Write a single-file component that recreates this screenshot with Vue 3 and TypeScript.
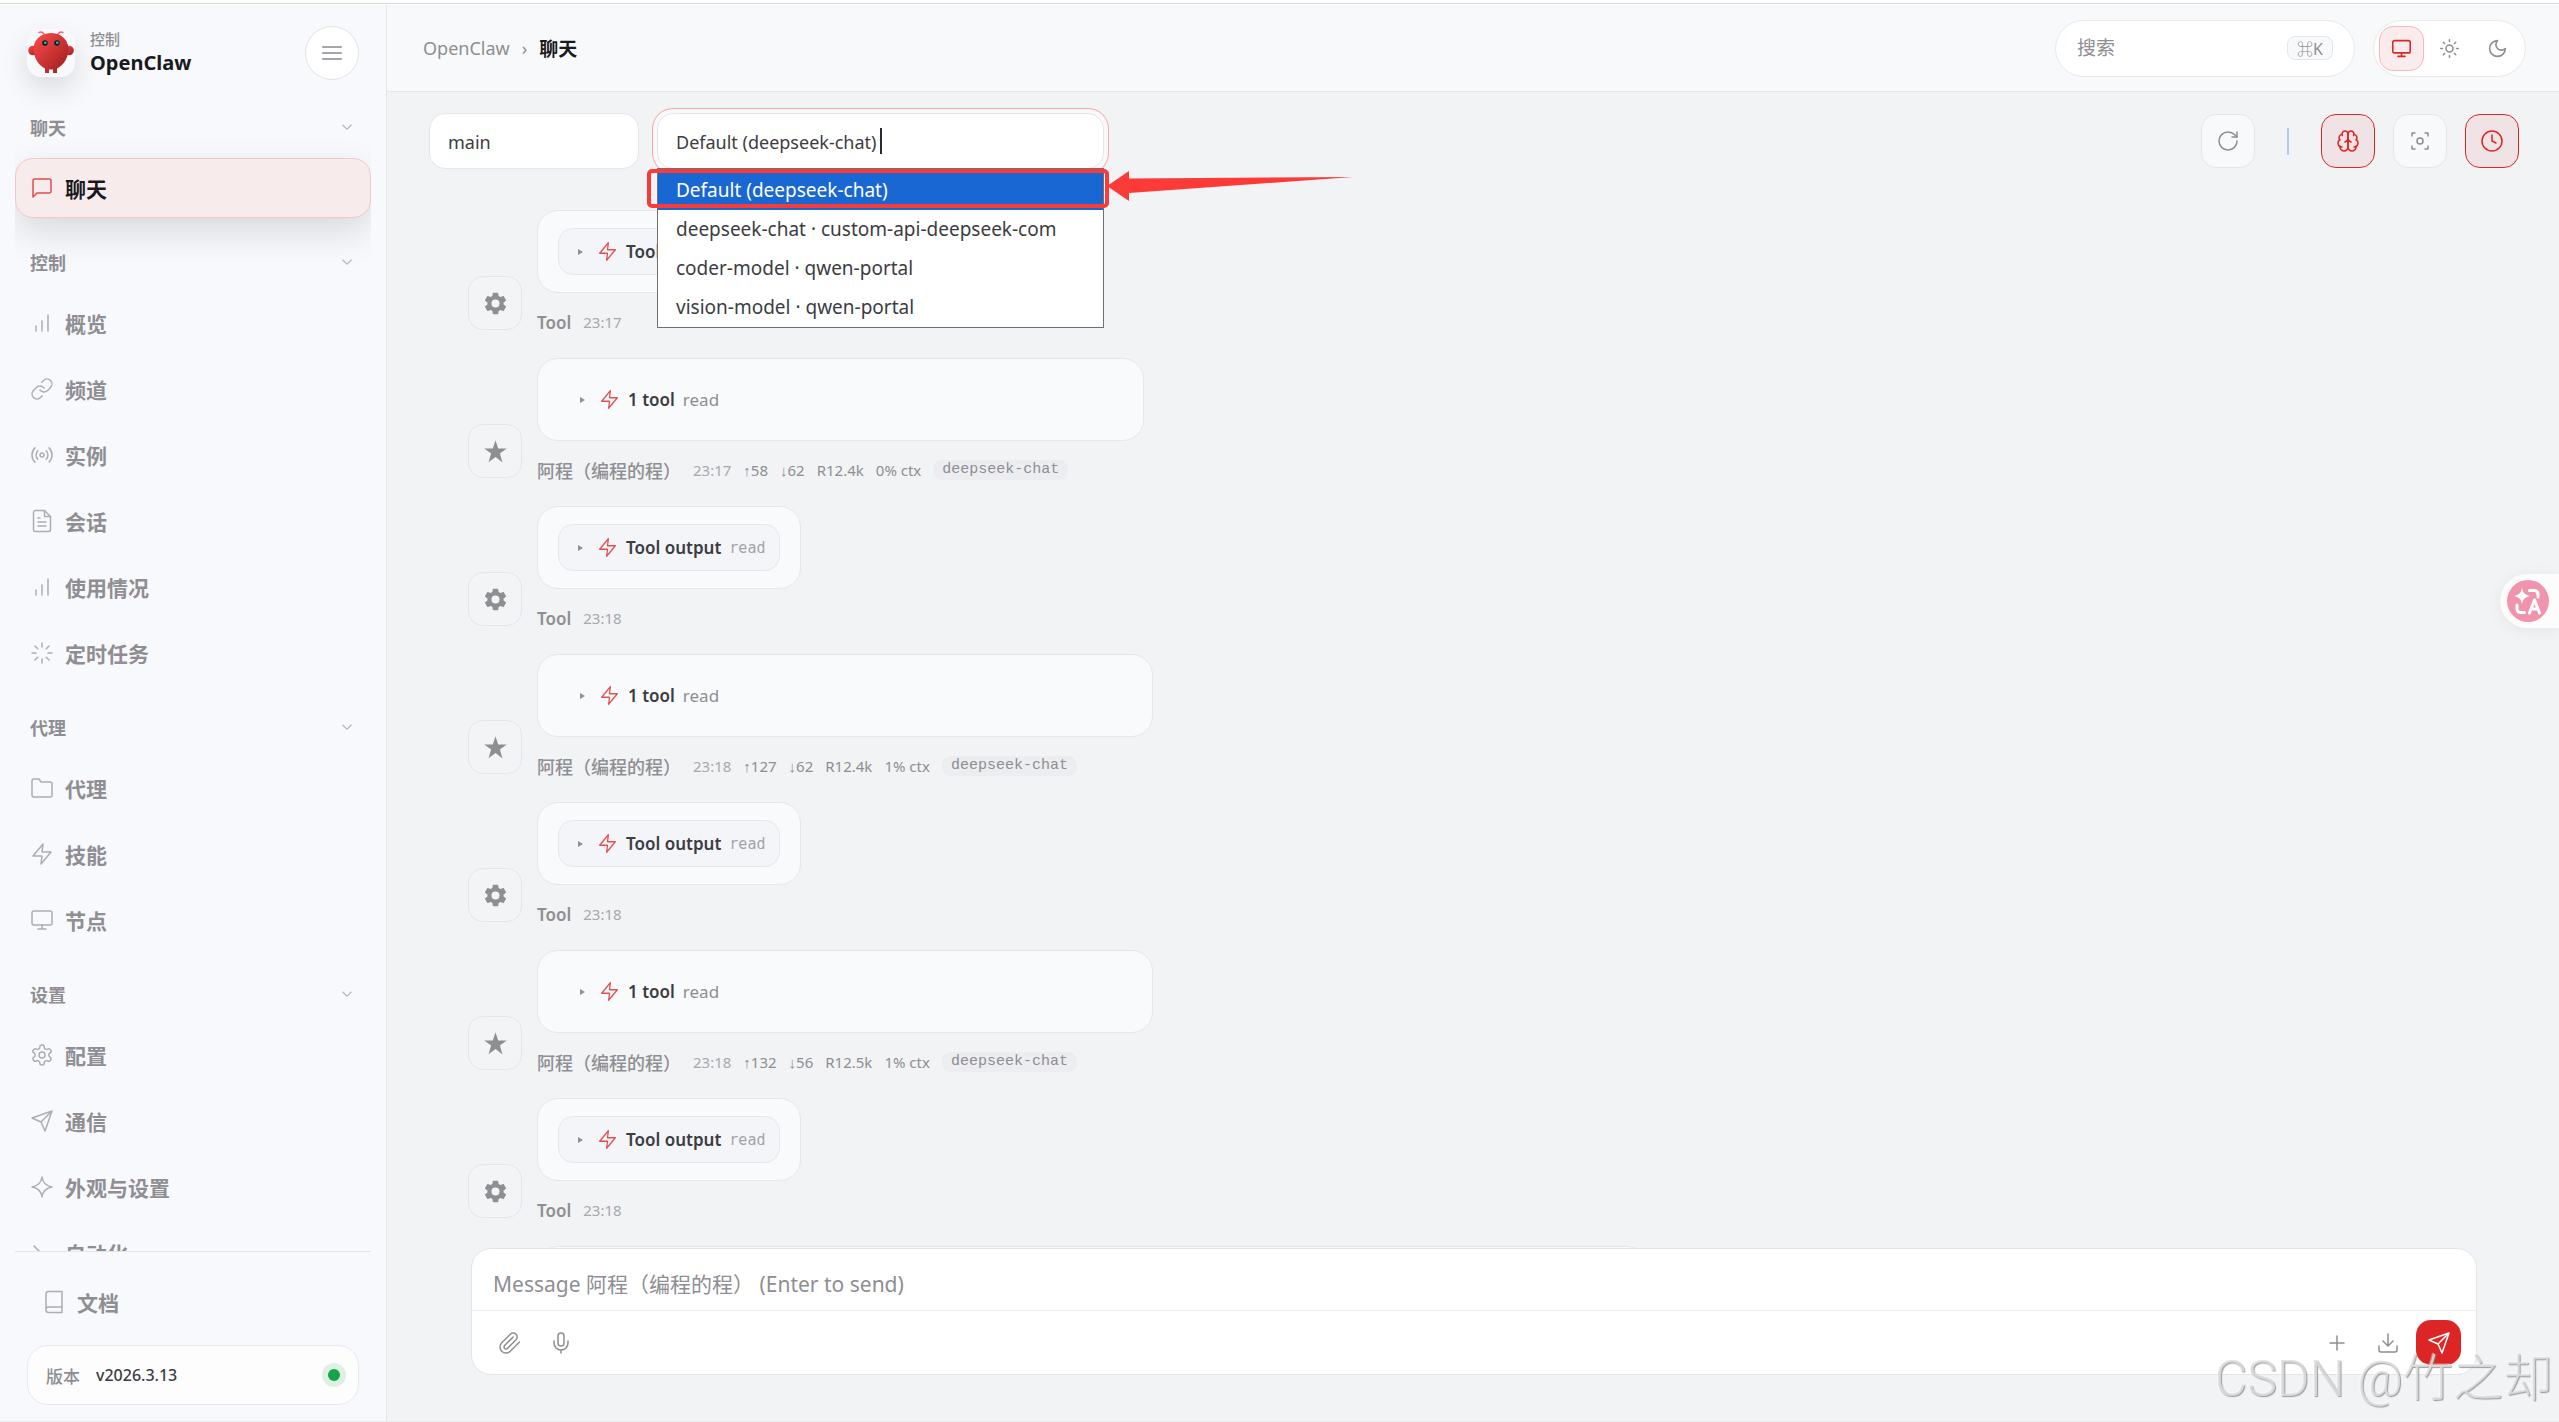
<script setup lang="ts">
import { ref } from 'vue'

interface NavItem {
  label: string
  icon: string
  active?: boolean
}
interface NavSection {
  title: string
  items: NavItem[]
}
interface Message {
  kind: 'output' | 'assistant'
  time: string
  stats?: string[]
}

const icons: Record<string, string> = {
  chat: '<path d="M21 15a2 2 0 0 1-2 2H7l-4 4V5a2 2 0 0 1 2-2h14a2 2 0 0 1 2 2z"/>',
  bars: '<path d="M12 20V10M18 20V4M6 20v-5"/>',
  link: '<path d="M10 13a5 5 0 0 0 7.54.54l3-3a5 5 0 0 0-7.07-7.07l-1.72 1.71"/><path d="M14 11a5 5 0 0 0-7.54-.54l-3 3a5 5 0 0 0 7.07 7.07l1.71-1.71"/>',
  radio: '<path d="M4.9 19.1C1 15.2 1 8.8 4.9 4.9M7.8 16.2c-2.3-2.3-2.3-6.1 0-8.5M16.2 7.8c2.3 2.3 2.3 6.1 0 8.5M19.1 4.9C23 8.8 23 15.1 19.1 19"/><circle cx="12" cy="12" r="2"/>',
  file: '<path d="M14.5 1.5H5.500a2 2 0 0 0-2 2v17a2 2 0 0 0 2 2h13a2 2 0 0 0 2-2V7.500z"/><path d="M14.500 1.500v6h6M16 13H8M16 17H8M10 9H8"/>',
  loader: '<path d="M12 2v4M12 18v4M4.930 4.930l2.830 2.830M16.240 16.240l2.830 2.830M2 12h4M18 12h4M4.930 19.070l2.830-2.830M16.240 7.760l2.830-2.830"/>',
  folder: '<path d="M22 19a2 2 0 0 1-2 2H4a2 2 0 0 1-2-2V5a2 2 0 0 1 2-2h5l2 3h9a2 2 0 0 1 2 2z"/>',
  bolt: '<path d="M13 2 3 14h9l-1 8 10-12h-9z"/>',
  monitor: '<rect x="2" y="3" width="20" height="14" rx="2"/><path d="M8 21h8M12 17v4"/>',
  gear: '<path d="M12.220 2h-.440a2 2 0 0 0-2 2v.180a2 2 0 0 1-1 1.730l-.430.250a2 2 0 0 1-2 0l-.150-.080a2 2 0 0 0-2.730.730l-.220.380a2 2 0 0 0 .730 2.730l.150.100a2 2 0 0 1 1 1.720v.510a2 2 0 0 1-1 1.740l-.150.090a2 2 0 0 0-.730 2.730l.220.380a2 2 0 0 0 2.730.730l.150-.080a2 2 0 0 1 2 0l.430.250a2 2 0 0 1 1 1.730V20a2 2 0 0 0 2 2h.440a2 2 0 0 0 2-2v-.180a2 2 0 0 1 1-1.730l.430-.250a2 2 0 0 1 2 0l.150.080a2 2 0 0 0 2.730-.730l.220-.390a2 2 0 0 0-.730-2.730l-.150-.080a2 2 0 0 1-1-1.740v-.500a2 2 0 0 1 1-1.740l.150-.090a2 2 0 0 0 .730-2.730l-.220-.380a2 2 0 0 0-2.730-.730l-.150.080a2 2 0 0 1-2 0l-.430-.250a2 2 0 0 1-1-1.730V4a2 2 0 0 0-2-2z"/><circle cx="12" cy="12" r="3"/>',
  send: '<path d="m22 2-7 20-4-9-9-4zM22 2 11 13"/>',
  spark: '<path d="M12 2c.8 5.600 4 9 10 10-6 1-9.200 4.400-10 10-.8-5.600-4-9-10-10 6-1 9.200-4.400 10-10z"/>',
  terminal: '<path d="m4 17 6-6-6-6M12 19h8"/>',
  book: '<path d="M4 19.500A2.500 2.500 0 0 1 6.500 17H20M6.500 1.500H20v21H6.500A2.500 2.500 0 0 1 4 20V4a2.500 2.500 0 0 1 2.500-2.500z"/>',
  menu: '<path d="M3 6h18M3 12h18M3 18h18"/>',
  chevron: '<path d="m6 9 6 6 6-6"/>',
  sun: '<circle cx="12" cy="12" r="4"/><path d="M12 2v2M12 20v2M4.930 4.930l1.410 1.410M17.660 17.660l1.410 1.410M2 12h2M20 12h2M6.340 17.660l-1.410 1.410M19.070 4.930l-1.410 1.410"/>',
  moon: '<path d="M12 3a6 6 0 0 0 9 9 9 9 0 1 1-9-9z"/>',
  refresh: '<path d="M21 12a9 9 0 1 1-9-9c2.520 0 4.930 1 6.740 2.740L21 8"/><path d="M21 3v5h-5"/>',
  brain: '<path d="M12 5a3 3 0 1 0-5.997.125 4 4 0 0 0-2.526 5.770 4 4 0 0 0 .556 6.588A4 4 0 1 0 12 18Z"/><path d="M12 5a3 3 0 1 1 5.997.125 4 4 0 0 1 2.526 5.770 4 4 0 0 1-.556 6.588A4 4 0 1 1 12 18Z"/><path d="M15 13a4.500 4.500 0 0 1-3-4 4.500 4.500 0 0 1-3 4M17.599 6.500a3 3 0 0 0 .399-1.375M6.003 5.125A3 3 0 0 0 6.401 6.500M3.477 10.896a4 4 0 0 1 .585-.396M19.938 10.500a4 4 0 0 1 .585.396M6 18a4 4 0 0 1-1.967-.516M19.967 17.484A4 4 0 0 1 18 18"/>',
  focus: '<path d="M4 7V4h3M17 4h3v3M20 17v3h-3M7 20H4v-3"/><circle cx="12" cy="12" r="3"/>',
  clock: '<circle cx="12" cy="12" r="10"/><path d="M12 6v6l4 2"/>',
  clip: '<path d="m21.440 11.050-9.190 9.190a6 6 0 0 1-8.490-8.490l8.570-8.570A4 4 0 1 1 18 8.840l-8.590 8.570a2 2 0 0 1-2.830-2.830l8.490-8.480"/>',
  mic: '<path d="M12 2a3 3 0 0 0-3 3v7a3 3 0 0 0 6 0V5a3 3 0 0 0-3-3z"/><path d="M19 10v2a7 7 0 0 1-14 0v-2M12 19v3"/>',
  plus: '<path d="M5 12h14M12 5v14"/>',
  download: '<path d="M21 15v4a2 2 0 0 1-2 2H5a2 2 0 0 1-2-2v-4M7 10l5 5 5-5M12 15V3"/>',
}

const sections: NavSection[] = [
  { title: '聊天', items: [{ label: '聊天', icon: 'chat', active: true }] },
  {
    title: '控制',
    items: [
      { label: '概览', icon: 'bars' },
      { label: '频道', icon: 'link' },
      { label: '实例', icon: 'radio' },
      { label: '会话', icon: 'file' },
      { label: '使用情况', icon: 'bars' },
      { label: '定时任务', icon: 'loader' },
    ],
  },
  {
    title: '代理',
    items: [
      { label: '代理', icon: 'folder' },
      { label: '技能', icon: 'bolt' },
      { label: '节点', icon: 'monitor' },
    ],
  },
  {
    title: '设置',
    items: [
      { label: '配置', icon: 'gear' },
      { label: '通信', icon: 'send' },
      { label: '外观与设置', icon: 'spark' },
      { label: '自动化', icon: 'terminal' },
    ],
  },
]

const models = [
  'Default (deepseek-chat)',
  'deepseek-chat · custom-api-deepseek-com',
  'coder-model · qwen-portal',
  'vision-model · qwen-portal',
]
const model = ref(models[0])
const session = ref('main')
const query = ref('')
const draft = ref('')

const messages: Message[] = [
  { kind: 'output', time: '23:17' },
  { kind: 'assistant', time: '23:17', stats: ['↑58', '↓62', 'R12.4k', '0% ctx'] },
  { kind: 'output', time: '23:18' },
  { kind: 'assistant', time: '23:18', stats: ['↑127', '↓62', 'R12.4k', '1% ctx'] },
  { kind: 'output', time: '23:18' },
  { kind: 'assistant', time: '23:18', stats: ['↑132', '↓56', 'R12.5k', '1% ctx'] },
  { kind: 'output', time: '23:18' },
]
</script>

<template>
  <div class="shell">
    <div class="edge"></div>
    <div class="layout">
      <aside class="sidebar">
        <div class="brand">
          <svg class="logo" viewBox="0 0 48 48">
            <defs>
              <linearGradient id="shell-red" x1="0" y1="0" x2="1" y2="1">
                <stop offset="0" stop-color="#ff4d4d" />
                <stop offset="1" stop-color="#991b1b" />
              </linearGradient>
            </defs>
            <path d="M17 5q-2-3-5-1.500M31 5q2-3 5-1.500" fill="none" stroke="#f26a6a" stroke-width="1.500" stroke-linecap="round" />
            <circle cx="6" cy="21.500" r="4.800" fill="url(#shell-red)" />
            <circle cx="42" cy="21.500" r="4.800" fill="url(#shell-red)" />
            <path d="M24 4C12 4 6 13 6.500 21c.6 9 6 16 11.500 18.500V44h4v-3.500h4V44h4v-4.500C35.500 37 41 30 41.500 21 42 13 36 4 24 4z" fill="url(#shell-red)" />
            <circle cx="18" cy="14" r="2.700" fill="#101820" />
            <circle cx="30" cy="14" r="2.700" fill="#101820" />
            <circle cx="18.300" cy="13.800" r="1.300" fill="#00d5bd" />
            <circle cx="30.300" cy="13.800" r="1.300" fill="#00d5bd" />
          </svg>
          <div class="brand-text">
            <span class="eyebrow">控制</span>
            <strong class="product">OpenClaw</strong>
          </div>
          <button class="collapse" type="button" aria-label="Toggle sidebar">
            <svg class="icon heavy" viewBox="0 0 24 24" v-html="icons.menu"></svg>
          </button>
        </div>

        <nav class="nav">
          <section v-for="s in sections" :key="s.title" class="nav-section">
            <button class="nav-title" type="button">
              <span>{{ s.title }}</span>
              <svg class="chevron" viewBox="0 0 24 24" v-html="icons.chevron"></svg>
            </button>
            <div class="nav-items">
              <a v-for="i in s.items" :key="i.label" href="#" class="nav-item" :class="{ active: i.active }">
                <svg class="icon" viewBox="0 0 24 24" v-html="icons[i.icon]"></svg>
                <span>{{ i.label }}</span>
              </a>
            </div>
          </section>
        </nav>

        <footer class="side-foot">
          <a href="#" class="nav-item">
            <svg class="icon" viewBox="0 0 24 24" v-html="icons.book"></svg>
            <span>文档</span>
          </a>
          <div class="version">
            <span class="version-label">版本</span>
            <span class="version-no">v2026.3.13</span>
            <span class="status"></span>
          </div>
        </footer>
      </aside>

      <div class="content">
        <header class="topbar">
          <div class="crumbs">
            <a href="#">OpenClaw</a>
            <span class="sep">›</span>
            <strong>聊天</strong>
          </div>
          <label class="search">
            <input v-model="query" type="text" placeholder="搜索" aria-label="搜索" />
            <kbd>⌘K</kbd>
          </label>
          <div class="themes">
            <button class="on" type="button" aria-label="System"><svg class="icon" viewBox="0 0 24 24" v-html="icons.monitor"></svg></button>
            <button type="button" aria-label="Light"><svg class="icon" viewBox="0 0 24 24" v-html="icons.sun"></svg></button>
            <button type="button" aria-label="Dark"><svg class="icon" viewBox="0 0 24 24" v-html="icons.moon"></svg></button>
          </div>
        </header>

        <div class="toolbar">
          <select v-model="session" class="field session" aria-label="Session">
            <option>main</option>
          </select>
          <div class="picker">
            <input v-model="model" class="field" type="text" role="combobox" aria-expanded="true" aria-label="Model" />
            <span class="caret"></span>
            <ul class="menu" role="listbox">
              <li v-for="(m, n) in models" :key="m" role="option" :aria-selected="n === 0" :class="{ chosen: n === 0 }">{{ m }}</li>
            </ul>
            <div class="mark"></div>
            <svg class="arrow" viewBox="0 0 246 32"><path d="M0 16 22 1v7.500L246 7 22 23v8z" fill="#fc3a38" /></svg>
          </div>
          <div class="tools">
            <button class="tool" type="button" aria-label="Refresh"><svg class="icon" viewBox="0 0 24 24" v-html="icons.refresh"></svg></button>
            <span class="rule"></span>
            <button class="tool on" type="button" aria-label="Thinking"><svg class="icon" viewBox="0 0 24 24" v-html="icons.brain"></svg></button>
            <button class="tool" type="button" aria-label="Focus"><svg class="icon" viewBox="0 0 24 24" v-html="icons.focus"></svg></button>
            <button class="tool on" type="button" aria-label="History"><svg class="icon" viewBox="0 0 24 24" v-html="icons.clock"></svg></button>
          </div>
        </div>

        <main class="thread">
          <article v-for="(m, n) in messages" :key="n" class="message">
            <div class="avatar">
              <svg v-if="m.kind === 'output'" viewBox="0 0 24 24">
                <path fill-rule="evenodd" d="M19.140 12.940a7 7 0 0 0 0-1.880l2.030-1.580a.5.5 0 0 0 .120-.610l-1.920-3.320a.5.5 0 0 0-.590-.220l-2.390.960a7 7 0 0 0-1.620-.940l-.360-2.540a.5.5 0 0 0-.480-.410h-3.840a.5.5 0 0 0-.480.410l-.360 2.540a7 7 0 0 0-1.620.940l-2.390-.960a.5.5 0 0 0-.590.220L2.740 8.870a.5.5 0 0 0 .120.610l2.030 1.580a7 7 0 0 0 0 1.880l-2.030 1.580a.5.5 0 0 0-.120.610l1.920 3.320c.120.220.370.290.590.220l2.390-.960a7 7 0 0 0 1.620.940l.360 2.540c.050.240.240.410.480.410h3.840a.5.5 0 0 0 .480-.410l.360-2.540a7 7 0 0 0 1.620-.940l2.390.960c.220.080.470 0 .590-.220l1.920-3.320a.5.5 0 0 0-.120-.610zM12 15.600a3.600 3.600 0 1 1 0-7.200 3.600 3.600 0 0 1 0 7.200z" />
              </svg>
              <svg v-else viewBox="0 0 24 24"><path d="m12 2 2.400 7.300H22l-6.100 4.500 2.300 7.700-6.200-4.700-6.200 4.700 2.300-7.700L2 9.300h7.600z" /></svg>
            </div>
            <div class="body">
              <div class="bubble">
                <div class="chip" :class="m.kind">
                  <span class="tri"></span>
                  <svg class="icon zap" viewBox="0 0 24 24" v-html="icons.bolt"></svg>
                  <strong>{{ m.kind === 'output' ? 'Tool output' : '1 tool' }}</strong>
                  <span class="fn">read</span>
                </div>
              </div>
              <div class="meta" :class="m.kind">
                <span class="who">{{ m.kind === 'output' ? 'Tool' : '阿程（编程的程）' }}</span>
                <time>{{ m.time }}</time>
                <span v-for="s in m.stats" :key="s">{{ s }}</span>
                <code v-if="m.stats">deepseek-chat</code>
              </div>
            </div>
          </article>
          <article class="message">
            <div class="body next"><div class="bubble"></div></div>
          </article>
        </main>

        <form class="composer" @submit.prevent>
          <textarea v-model="draft" rows="1" placeholder="Message 阿程（编程的程） (Enter to send)" aria-label="Message"></textarea>
          <div class="actions">
            <button type="button" aria-label="Attach"><svg class="icon" viewBox="0 0 24 24" v-html="icons.clip"></svg></button>
            <button type="button" aria-label="Voice"><svg class="icon" viewBox="0 0 24 24" v-html="icons.mic"></svg></button>
            <span class="space"></span>
            <button type="button" aria-label="New"><svg class="icon" viewBox="0 0 24 24" v-html="icons.plus"></svg></button>
            <button type="button" aria-label="Export"><svg class="icon" viewBox="0 0 24 24" v-html="icons.download"></svg></button>
            <button class="send" type="submit" aria-label="Send"><svg class="icon" viewBox="0 0 24 24" v-html="icons.send"></svg></button>
          </div>
        </form>
      </div>
    </div>

    <button class="translate" type="button" aria-label="Translate">
      <svg viewBox="0 0 42 42">
        <circle cx="21" cy="21" r="21" fill="#f093ac" />
        <path d="M15 7.500c1 5.500 2.500 7 8 8.500-5.500 1.500-7 3-8 8.500-1-5.500-2.500-7-8-8.500 5.500-1.500 7-3 8-8.500z" fill="#fff" />
        <path d="M22.500 10.500H27q4 0 4 4V17M10 25v3.500q0 4 4 4h3.500" fill="none" stroke="#fff" stroke-width="3" stroke-linecap="round" />
        <path d="m22.500 33 5-13 5 13M24.500 29h6" fill="none" stroke="#fff" stroke-width="3" stroke-linecap="round" stroke-linejoin="round" />
      </svg>
    </button>
    <div class="watermark">CSDN @竹之却</div>
  </div>
</template>

<style>
body {
  margin: 0;
  background: #f1f3f5;
}
</style>

<style scoped>
* {
  box-sizing: border-box;
}
.shell {
  position: relative;
  display: flex;
  flex-direction: column;
  height: 100vh;
  overflow: hidden;
  font-family: "Noto Sans", "Noto Sans CJK SC", sans-serif;
  font-size: 18px;
  color: #3c3c43;
  background: #f1f3f5;
  border-bottom: 1px solid #e8eaed;
}
button,
input,
select,
textarea {
  font: inherit;
  color: inherit;
}
button {
  display: flex;
  align-items: center;
  justify-content: center;
  padding: 0;
  border: 0;
  background: none;
}
a {
  color: inherit;
  text-decoration: none;
}
.icon {
  flex: none;
  width: 24px;
  height: 24px;
  fill: none;
  stroke: currentColor;
  stroke-width: 1.5;
  stroke-linecap: round;
  stroke-linejoin: round;
}
.edge {
  flex: none;
  height: 5px;
  background: linear-gradient(#fff 3px, #dcdcde 3px, #dcdcde 4px, #fff 4px);
}
.layout {
  flex: 1;
  min-height: 0;
  display: flex;
}

/* Sidebar */
.sidebar {
  flex: none;
  width: 387px;
  display: flex;
  flex-direction: column;
  padding: 21px 15px 16px;
  background: #f8f9fc;
  border-right: 1px solid #e5e6ea;
}
.brand {
  display: flex;
  align-items: center;
  height: 54px;
  margin: 0 12px 28px;
}
.logo {
  width: 48px;
  height: 48px;
  border-radius: 14px;
  background: #f8f9fb;
  box-shadow: 0 12px 28px rgba(0, 0, 0, 0.12);
}
.brand-text {
  flex: 1;
  display: flex;
  flex-direction: column;
  padding: 0 0 3px 15px;
}
.eyebrow {
  font-size: 15px;
  line-height: 22px;
  font-weight: 500;
  color: #8e8e93;
}
.product {
  font-size: 20px;
  line-height: 26px;
  font-weight: 700;
  color: #1a1a1e;
}
.collapse {
  width: 54px;
  height: 54px;
  border: 1px solid #e2e3e7;
  border-radius: 50%;
  background: #fff;
  color: #a4a4aa;
}
.heavy {
  stroke-width: 2;
}
.nav {
  flex: 1;
  min-height: 0;
  overflow: hidden;
  display: flex;
  flex-direction: column;
  gap: 25px;
}
.nav-section {
  flex: none;
}
.nav-title {
  justify-content: space-between;
  width: 100%;
  height: 38px;
  margin-bottom: 12px;
  padding: 0 15px;
  font-weight: 600;
  color: #8e8e93;
}
.chevron {
  width: 18px;
  height: 18px;
  fill: none;
  stroke: #b4b4b9;
  stroke-width: 1.5;
}
.nav-items {
  display: flex;
  flex-direction: column;
  gap: 6px;
}
.nav-item {
  display: flex;
  align-items: center;
  gap: 11px;
  height: 60px;
  padding: 0 14px;
  border: 1px solid transparent;
  border-radius: 18px;
  font-size: 21px;
  font-weight: 600;
  color: #8e8e93;
}
.nav-item .icon {
  opacity: 0.7;
}
.nav-item.active {
  color: #1a1a1e;
  background: #f8ebeb;
  border-color: #f4c6c8;
  box-shadow: 0 14px 36px rgba(0, 0, 0, 0.13);
}
.nav-item.active .icon {
  color: #dc2626;
  opacity: 0.8;
}
.side-foot {
  flex: none;
  padding: 20px 12px 0;
  border-top: 1px solid #e5e6ea;
}
.version {
  display: flex;
  align-items: center;
  gap: 16px;
  height: 60px;
  margin-top: 13px;
  padding: 0 12px 0 18px;
  border: 1px solid #e8e9ee;
  border-radius: 21px;
  background: #fdfdfe;
}
.version-label {
  font-size: 17px;
  font-weight: 500;
  color: #8e8e93;
}
.version-no {
  flex: 1;
  font-size: 16px;
  font-weight: 500;
}
.status {
  width: 24px;
  height: 24px;
  border: 6px solid #dcf1e3;
  border-radius: 50%;
  background: #16a34a;
}

/* Top bar */
.content {
  flex: 1;
  min-width: 0;
  display: flex;
  flex-direction: column;
}
.topbar {
  flex: none;
  display: flex;
  align-items: center;
  height: 87px;
  padding: 0 33px 0 36px;
  background: #f8f9fb;
  border-bottom: 1px solid #e5e6ea;
}
.crumbs {
  flex: 1;
  display: flex;
  align-items: center;
  gap: 12px;
  color: #8e8e93;
}
.crumbs strong {
  font-size: 19px;
  font-weight: 700;
  color: #1a1a1e;
}
.search {
  display: flex;
  align-items: center;
  width: 300px;
  height: 57px;
  margin-right: 18px;
  padding: 0 21px;
  border: 1px solid #e8e9ed;
  border-radius: 29px;
  background: #fff;
}
.search input {
  flex: 1;
  min-width: 0;
  padding: 0;
  border: 0;
  outline: 0;
  background: none;
  font-size: 19px;
}
::placeholder {
  color: #8e8e93;
  opacity: 1;
}
.search kbd {
  display: flex;
  align-items: center;
  justify-content: center;
  width: 46px;
  height: 24px;
  border: 1px solid #e5e6ea;
  border-radius: 8px;
  background: #f8f9fb;
  font-family: inherit;
  font-size: 16px;
  color: #8e8e93;
}
.themes {
  display: flex;
  align-items: center;
  gap: 3px;
  height: 57px;
  padding: 0 5px;
  border: 1px solid #e8e9ed;
  border-radius: 29px;
  background: #fff;
  color: #8e8e93;
}
.themes button {
  width: 45px;
  height: 45px;
  border: 1px solid transparent;
  border-radius: 14px;
}
.themes .icon {
  width: 21px;
  height: 21px;
  stroke-width: 1.8;
}
.themes .on {
  color: #dc2626;
  background: #faecec;
  border-color: #f4b9b9;
}

/* Session toolbar */
.toolbar {
  flex: none;
  display: flex;
  align-items: center;
  gap: 18px;
  padding: 21px 40px 21px 42px;
}
.field {
  display: block;
  width: 100%;
  height: 56px;
  margin: 0;
  padding: 2px 18px 0;
  border: 1px solid #e5e6ea;
  border-radius: 16px;
  outline: 0;
  appearance: none;
  background: #fff;
  font-size: 18px;
}
.session {
  width: 210px;
}
.picker {
  position: relative;
  z-index: 2;
  width: 447px;
}
.picker .field {
  box-shadow: 0 0 0 4px #f8f9fb, 0 0 0 5px #f9a8a8;
}
.caret {
  position: absolute;
  top: 15px;
  left: 223px;
  width: 2px;
  height: 26px;
  background: #2b2b33;
}
.menu {
  position: absolute;
  top: 55px;
  left: 0;
  right: 0;
  margin: 0;
  padding: 2px 0 0;
  border: 1px solid #6f7074;
  background: #fff;
  list-style: none;
}
.menu li {
  height: 39px;
  padding: 0 18px;
  font-size: 19px;
  line-height: 39px;
  white-space: nowrap;
}
.menu .chosen {
  color: #fff;
  background: #1967d2;
}
.mark {
  position: absolute;
  top: 56px;
  left: -10px;
  right: -5px;
  height: 39px;
  border: 4px solid #fc3a38;
  border-radius: 5px;
}
.arrow {
  position: absolute;
  top: 57px;
  left: 450px;
  width: 246px;
  height: 32px;
}
.tools {
  flex: 1;
  display: flex;
  align-items: center;
  justify-content: flex-end;
  gap: 16px;
}
.tool {
  width: 54px;
  height: 54px;
  border: 1px solid #e5e6ea;
  border-radius: 15px;
  background: #f8f9fb;
  color: #8e8e93;
}
.tools {
  gap: 18px;
}
.tool.on {
  border-color: #dc2626;
  background: #f0e3e6;
  color: #dc2626;
}
.rule {
  width: 2px;
  height: 27px;
  margin: 0 14px;
  background: #b4cbe4;
}

/* Thread */
.thread {
  flex: 1;
  min-height: 0;
  overflow: hidden;
  display: flex;
  flex-direction: column;
  gap: 23px;
  padding: 20px 81px 0;
}
.message {
  flex: none;
  display: flex;
  align-items: flex-end;
  gap: 15px;
}
.avatar {
  display: flex;
  align-items: center;
  justify-content: center;
  width: 54px;
  height: 54px;
  margin-bottom: 5px;
  border: 1px solid #e5e6ea;
  border-radius: 15px;
  background: #f3f4f6;
}
.avatar svg {
  width: 27px;
  height: 27px;
  fill: #8e8e93;
}
.body {
  display: flex;
  flex-direction: column;
  align-items: stretch;
}
.bubble {
  display: flex;
  height: 83px;
  padding: 17px 20px;
  border: 1px solid #e6e7eb;
  border-radius: 21px;
  background: #f9fafc;
}
.next {
  width: 1180px;
  padding-left: 69px;
}
.chip {
  display: flex;
  align-items: center;
  padding: 0 14px 0 19px;
  border: 1px solid transparent;
  border-radius: 15px;
}
.chip.output {
  border-color: #e6e7eb;
  background: #f4f5f8;
}
.chip.assistant {
  padding-left: 21px;
}
.tri {
  border: 3px solid transparent;
  border-left: 5px solid #8e8e93;
  border-right: 0;
}
.zap {
  width: 21px;
  height: 21px;
  margin: 0 8px 0 14px;
  color: #e05252;
}
.chip strong {
  font-size: 17px;
  font-weight: 600;
}
.fn {
  margin-left: 8px;
  font-size: 17px;
  color: #8e8e93;
}
.output .fn {
  font-family: "DejaVu Sans Mono", monospace;
  font-size: 15px;
  color: #a3a3a8;
}
.meta {
  display: flex;
  align-items: center;
  gap: 12px;
  height: 26px;
  margin-top: 16px;
  font-family: "Noto Sans", "Liberation Sans", "Noto Sans CJK SC", sans-serif;
  font-size: 15px;
  color: #8e8e93;
  white-space: nowrap;
}
.meta.assistant {
  padding-right: 76px;
}
.who {
  font-size: 18px;
  font-weight: 500;
}
.output .who {
  font-size: 17px;
  font-weight: 600;
}
.meta time {
  color: #a8a8ad;
}
.meta code {
  padding: 0 9px;
  border-radius: 9px;
  background: #ecedf0;
  font-family: "Liberation Mono", monospace;
  font-size: 15px;
  line-height: 20px;
}

/* Composer */
.composer {
  flex: none;
  display: flex;
  flex-direction: column;
  margin: 0 82px 46px 84px;
  border: 1px solid #e3e4e8;
  border-radius: 20px;
  background: #fff;
}
.composer textarea {
  display: block;
  width: 100%;
  height: 61px;
  padding: 20px 21px 10px;
  border: 0;
  outline: 0;
  resize: none;
  overflow: hidden;
  background: none;
  font-size: 21px;
  line-height: 30px;
}
.actions {
  display: flex;
  align-items: center;
  gap: 6px;
  height: 64px;
  padding: 0 15px;
  border-top: 1px solid #eeeff1;
  color: #8e8e93;
}
.actions button {
  width: 45px;
  height: 45px;
}
.space {
  flex: 1;
}
.actions .send {
  border-radius: 15px;
  background: #dc2626;
  color: #fff;
}

/* Floating layers */
.translate {
  position: absolute;
  top: 574px;
  right: 0;
  justify-content: flex-start;
  width: 59px;
  height: 54px;
  padding-left: 7px;
  border-radius: 27px 0 0 27px;
  background: #fcfcfd;
  box-shadow: 0 2px 16px rgba(0, 0, 0, 0.06);
}
.translate svg {
  width: 42px;
  height: 42px;
}
.watermark {
  position: absolute;
  right: 6px;
  bottom: 12px;
  font-family: Roboto, "Noto Sans CJK SC", sans-serif;
  font-size: 50px;
  line-height: 60px;
  font-weight: 300;
  color: rgba(222, 223, 224, 0.85);
  text-shadow: 1px 1px 1px rgba(120, 120, 120, 0.7), -1px -1px 0 rgba(255, 255, 255, 0.4);
  pointer-events: none;
}
</style>
